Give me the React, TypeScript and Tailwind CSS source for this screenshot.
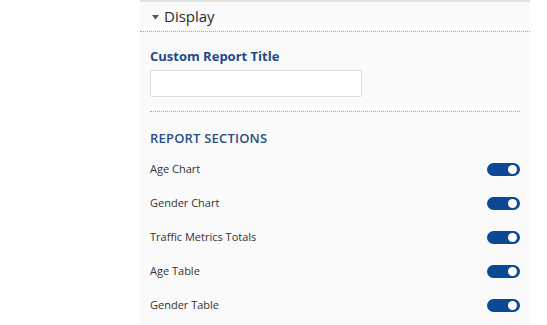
import { useState } from "react";

const sections = [
  "Age Chart",
  "Gender Chart",
  "Traffic Metrics Totals",
  "Age Table",
  "Gender Table",
];

const Toggle = ({ on, onClick }: { on: boolean; onClick: () => void }) => (
  <button
    type="button"
    onClick={onClick}
    className={`relative w-[33px] h-[13px] rounded-full ${
      on ? "bg-[#0c4893]" : "bg-[#c8c8c8]"
    }`}
  >
    <span
      className={`absolute top-[2px] w-[9px] h-[9px] rounded-full bg-white ${
        on ? "left-[21px]" : "left-[2px]"
      }`}
    />
  </button>
);

const App = () => {
  const [enabled, setEnabled] = useState(sections.map(() => true));
  const [title, setTitle] = useState("");

  return (
    <div
      className="w-[547px] h-[325px] bg-white overflow-hidden"
      style={{ fontFamily: '"Open Sans", sans-serif' }}
    >
      <div className="ml-[140px] w-[390px] h-full bg-[#fafafa] border-t-2 border-[#e2e2e2]">
        <div className="h-[30px] flex items-center pl-[12px] gap-[5px] border-b border-dotted border-[#aaa]">
          <svg width="7" height="5" viewBox="0 0 7 5" className="mt-[1px]">
            <path d="M0 0 L7 0 L3.5 4.5 Z" fill="#555" />
          </svg>
          <span className="text-[15px] font-medium text-[#2a2a2a] leading-none -mt-[1px]">Display</span>
        </div>

        <div className="px-[10px]">
          <h2 className="mt-[18px] text-[13px] font-bold text-[#1c4a8a] leading-none">
            Custom Report Title
          </h2>
          <input
            type="text"
            value={title}
            onChange={(e) => setTitle(e.target.value)}
            className="mt-[7px] w-[212px] h-[27px] bg-white border border-[#dcdcdc] rounded-[2px] px-2 text-[12px] outline-none"
          />

          <div className="mt-[14px] border-b border-dotted border-[#aaa]" />

          <h3 className="mt-[20px] text-[13px] font-semibold text-[#2c4f80] tracking-[0.2px] leading-none">
            REPORT SECTIONS
          </h3>

          <div className="mt-[7px] flex flex-col">
            {sections.map((name, i) => (
              <div key={name} className="h-[34px] flex items-center justify-between">
                <span className="text-[11px] text-[#333]">{name}</span>
                <Toggle
                  on={enabled[i]}
                  onClick={() =>
                    setEnabled(enabled.map((v, j) => (j === i ? !v : v)))
                  }
                />
              </div>
            ))}
          </div>
        </div>
      </div>
    </div>
  );
};

export default App;
